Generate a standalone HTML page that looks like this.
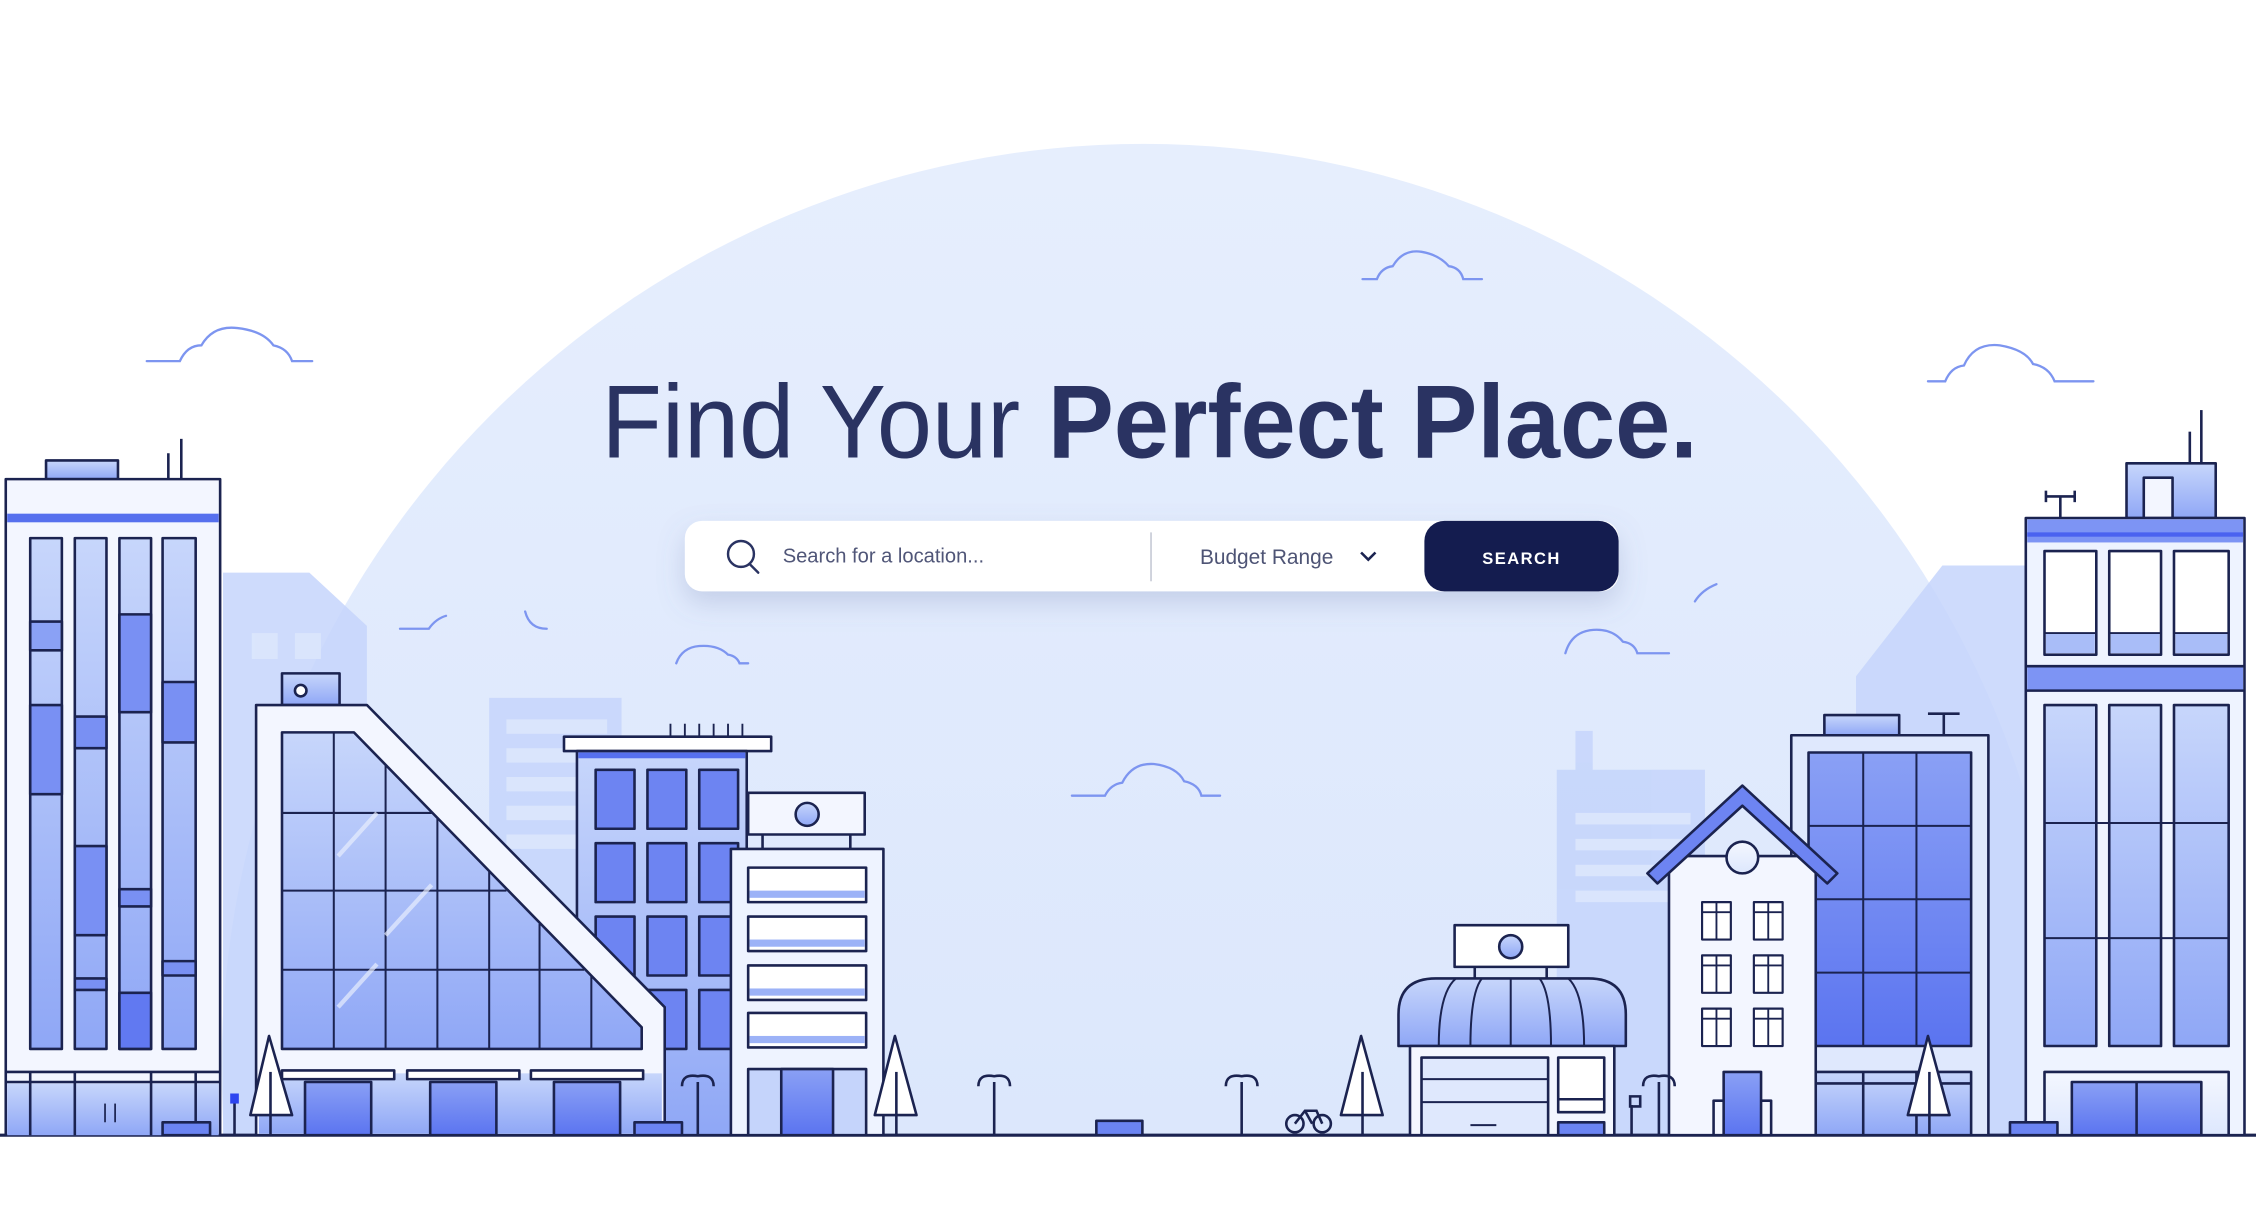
<!DOCTYPE html>
<html><head><meta charset="utf-8"><style>
html,body{margin:0;padding:0;background:#fff;width:2256px;height:1221px;overflow:hidden}
svg{display:block;overflow:hidden}
</style></head><body>
<svg width="2256" height="1221" viewBox="0 0 1568 848.6" xmlns="http://www.w3.org/2000/svg">
<defs>
<linearGradient id="bg" x1="0" y1="0" x2="0" y2="1"><stop offset="0" stop-color="#e6eefd"/><stop offset="1" stop-color="#d3e1fc"/></linearGradient>
<linearGradient id="glass" x1="0" y1="0" x2="0" y2="1"><stop offset="0" stop-color="#c7d6fb"/><stop offset="1" stop-color="#8fa7f6"/></linearGradient>
<linearGradient id="dark" x1="0" y1="0" x2="0" y2="1"><stop offset="0" stop-color="#8aa0f5"/><stop offset="1" stop-color="#5b74f0"/></linearGradient>
<linearGradient id="light" x1="0" y1="0" x2="0" y2="1"><stop offset="0" stop-color="#f4f7ff"/><stop offset="1" stop-color="#dde7fd"/></linearGradient>
<filter id="sh" x="-10%" y="-40%" width="120%" height="200%"><feDropShadow dx="0" dy="8" stdDeviation="9" flood-color="#6677aa" flood-opacity="0.25"/></filter>
<clipPath id="gc"><rect x="0" y="0" width="1568" height="789"/></clipPath>
</defs>

<g clip-path="url(#gc)"><circle cx="795" cy="741" r="641" fill="url(#bg)"/></g>

<g fill="#c5d5fb" opacity="0.85">
<path d="M155 398 H215 L255 435 V789 H155Z"/>
<rect x="340" y="485" width="92" height="304"/>
<path d="M1290 470 L1350 393 H1410 V789 H1290Z"/>
<rect x="1082" y="535" width="103" height="254"/>
<rect x="1095" y="508" width="12" height="30"/>
</g>
<g fill="#dce7fd" opacity="0.9">
<rect x="175" y="440" width="18" height="18"/><rect x="205" y="440" width="18" height="18"/>
<rect x="352" y="500" width="70" height="10"/><rect x="352" y="520" width="70" height="10"/><rect x="352" y="540" width="70" height="10"/><rect x="352" y="560" width="70" height="10"/><rect x="352" y="580" width="70" height="10"/>
<rect x="1095" y="565" width="80" height="8"/><rect x="1095" y="583" width="80" height="8"/><rect x="1095" y="601" width="80" height="8"/><rect x="1095" y="619" width="80" height="8"/>
</g>

<g fill="none" stroke="#7d95f0" stroke-width="1.6" stroke-linecap="round">
<path d="M102 251 H125 Q130 240 140 240 Q148 226 165 228 Q183 230 190 240 Q200 242 203 251 H217"/>
<path d="M947 194 H957 Q960 186 968 185 Q975 173 988 175 Q1000 177 1007 185 Q1015 186 1017 194 H1030"/>
<path d="M1340 265 H1352 Q1356 255 1365 254 Q1372 238 1390 240 Q1408 243 1413 253 Q1424 255 1428 265 H1455"/>
<path d="M745 553 H768 Q772 545 780 544 Q787 530 802 531 Q818 533 823 543 Q833 545 835 553 H848"/>
<path d="M1088 454 Q1092 440 1105 438 Q1120 436 1128 446 Q1136 447 1138 454 H1160"/>
<path d="M470 461 Q474 450 486 449 Q499 448 506 455 Q512 456 514 461 H520"/>
<path d="M278 437 H298 Q303 430 310 428 M365 425 Q368 437 380 437"/>
<path d="M1178 418 Q1183 410 1193 406"/>
</g>

<line x1="0" y1="789" x2="1568" y2="789" stroke="#1b2350" stroke-width="2.2"/>

<g stroke="#1b2350" stroke-width="1.8" stroke-linejoin="round">
<!-- left tower -->
<rect x="32" y="320" width="50" height="13" fill="url(#glass)"/>
<line x1="117" y1="315" x2="117" y2="333"/><line x1="126" y1="305" x2="126" y2="333"/>
<rect x="4" y="333" width="149" height="456" fill="#f3f6ff"/>
<rect x="5" y="357" width="147" height="6" fill="#5670ee" stroke="none"/>
<rect x="21" y="374" width="22" height="355" fill="url(#glass)"/>
<rect x="52" y="374" width="22" height="355" fill="url(#glass)"/>
<rect x="83" y="374" width="22" height="355" fill="url(#glass)"/>
<rect x="113" y="374" width="23" height="355" fill="url(#glass)"/>
<rect x="21" y="432" width="22" height="20" fill="#8aa1f5"/>
<rect x="21" y="490" width="22" height="62" fill="#7990f3"/>
<rect x="52" y="498" width="22" height="22" fill="#7990f3"/>
<rect x="52" y="588" width="22" height="62" fill="#7990f3"/>
<rect x="52" y="680" width="22" height="8" fill="#7990f3"/>
<rect x="83" y="427" width="22" height="68" fill="#7990f3"/>
<rect x="83" y="690" width="22" height="39" fill="#6179f1"/>
<rect x="83" y="618" width="22" height="12" fill="#7990f3"/>
<rect x="113" y="474" width="23" height="42" fill="#7990f3"/>
<rect x="113" y="668" width="23" height="10" fill="#7990f3"/>
<line x1="4" y1="745" x2="153" y2="745"/>
<rect x="5" y="753" width="147" height="36" fill="url(#glass)" stroke="none"/>
<line x1="4" y1="752" x2="153" y2="752"/>
<line x1="21" y1="745" x2="21" y2="789"/><line x1="52" y1="745" x2="52" y2="789"/><line x1="105" y1="745" x2="105" y2="789"/><line x1="136" y1="745" x2="136" y2="789"/>
<line x1="73" y1="767" x2="73" y2="780" stroke-width="1.2"/><line x1="80" y1="767" x2="80" y2="780" stroke-width="1.2"/>
<rect x="113" y="780" width="33" height="9" fill="#6b84f2"/>

<!-- middle building (behind) -->
<rect x="392" y="512" width="144" height="10" fill="#fff"/>
<g stroke-width="1.3"><line x1="466" y1="503" x2="466" y2="512"/><line x1="476" y1="503" x2="476" y2="512"/><line x1="486" y1="503" x2="486" y2="512"/><line x1="496" y1="503" x2="496" y2="512"/><line x1="506" y1="503" x2="506" y2="512"/><line x1="516" y1="503" x2="516" y2="512"/></g>
<rect x="401" y="522" width="118" height="267" fill="url(#glass)"/>
<rect x="402" y="523" width="116" height="4" fill="#5670ee" stroke="none"/>
<g fill="#6d84f2">
<rect x="414" y="535" width="27" height="41"/><rect x="450" y="535" width="27" height="41"/><rect x="486" y="535" width="27" height="41"/>
<rect x="414" y="586" width="27" height="41"/><rect x="450" y="586" width="27" height="41"/><rect x="486" y="586" width="27" height="41"/>
<rect x="414" y="637" width="27" height="41"/><rect x="450" y="637" width="27" height="41"/><rect x="486" y="637" width="27" height="41"/>
<rect x="414" y="688" width="27" height="41"/><rect x="450" y="688" width="27" height="41"/><rect x="486" y="688" width="27" height="41"/>
</g>

<!-- triangle glass building (in front) -->
<rect x="196" y="468" width="40" height="22" fill="url(#glass)"/>
<circle cx="209" cy="480" r="4" fill="#fff"/>
<path d="M178 490 H255 L462 700 V789 H178Z" fill="#f3f6ff"/>
<path d="M196 509 H246 L446 714 V729 H196Z" fill="url(#glass)"/>
<g fill="none" stroke-width="1.4">
<line x1="232" y1="509" x2="232" y2="729"/><line x1="268" y1="532" x2="268" y2="729"/><line x1="304" y1="569" x2="304" y2="729"/><line x1="340" y1="606" x2="340" y2="729"/><line x1="375" y1="642" x2="375" y2="729"/><line x1="411" y1="678" x2="411" y2="729"/>
<line x1="196" y1="565" x2="300" y2="565"/><line x1="196" y1="619" x2="352" y2="619"/><line x1="196" y1="674" x2="406" y2="674"/>
</g>
<g stroke="#e8eefe" stroke-width="3" opacity="0.7"><line x1="235" y1="595" x2="262" y2="565"/><line x1="268" y1="650" x2="300" y2="615"/><line x1="235" y1="700" x2="262" y2="670"/></g>
<rect x="180" y="746" width="280" height="42" fill="url(#glass)" stroke="none"/>
<rect x="196" y="744" width="78" height="6" fill="#fff"/><rect x="283" y="744" width="78" height="6" fill="#fff"/><rect x="369" y="744" width="78" height="6" fill="#fff"/>
<rect x="212" y="752" width="46" height="37" fill="url(#dark)"/><rect x="299" y="752" width="46" height="37" fill="url(#dark)"/><rect x="385" y="752" width="46" height="37" fill="url(#dark)"/>
<rect x="441" y="780" width="33" height="9" fill="#6b84f2"/>

<!-- right of middle -->
<rect x="520" y="551" width="81" height="29" fill="#f3f6ff"/>
<circle cx="561" cy="566" r="8" fill="url(#glass)"/>
<line x1="530" y1="580" x2="530" y2="590"/><line x1="591" y1="580" x2="591" y2="590"/>
<rect x="508" y="590" width="106" height="199" fill="#eef3ff"/>
<g fill="#fff"><rect x="520" y="603" width="82" height="24"/><rect x="520" y="637" width="82" height="24"/><rect x="520" y="671" width="82" height="24"/><rect x="520" y="704" width="82" height="24"/></g>
<g fill="#9cb2f7" stroke="none"><rect x="521" y="619" width="80" height="5"/><rect x="521" y="653" width="80" height="5"/><rect x="521" y="687" width="80" height="5"/><rect x="521" y="720" width="80" height="5"/></g>
<rect x="520" y="743" width="82" height="46" fill="#c5d4fb"/>
<rect x="543" y="743" width="36" height="46" fill="url(#dark)"/>

<!-- shop -->
<rect x="1011" y="643" width="79" height="29" fill="#fff"/>
<circle cx="1050" cy="658" r="8" fill="url(#glass)"/>
<line x1="1025" y1="672" x2="1025" y2="680"/><line x1="1075" y1="672" x2="1075" y2="680"/>
<path d="M972 727 V705 Q972 680 998 680 H1104 Q1130 680 1130 705 V727Z" fill="url(#glass)"/>
<g fill="none" stroke-width="1.4"><path d="M1000 727 Q1000 690 1012 680"/><path d="M1022 727 Q1022 690 1030 680"/><path d="M1050 727 V680"/><path d="M1078 727 Q1078 690 1070 680"/><path d="M1101 727 Q1101 690 1090 680"/></g>
<rect x="980" y="727" width="142" height="62" fill="#f3f6ff"/>
<rect x="988" y="735" width="88" height="54" fill="#dfe8fd"/>
<g stroke-width="1.4"><line x1="988" y1="750" x2="1076" y2="750"/><line x1="988" y1="766" x2="1076" y2="766"/><line x1="1022" y1="782" x2="1040" y2="782"/></g>
<rect x="1083" y="735" width="32" height="38" fill="#fff"/>
<line x1="1083" y1="764" x2="1115" y2="764"/>
<rect x="1083" y="780" width="32" height="9" fill="#6b84f2"/>

<!-- blue glass building right -->
<rect x="1268" y="497" width="52" height="14" fill="url(#glass)"/>
<line x1="1340" y1="496" x2="1362" y2="496"/><line x1="1351" y1="496" x2="1351" y2="511"/>
<rect x="1245" y="511" width="137" height="278" fill="#dfe8fd"/>
<rect x="1257" y="523" width="113" height="204" fill="url(#dark)"/>
<g stroke-width="1.4"><line x1="1295" y1="523" x2="1295" y2="727"/><line x1="1332" y1="523" x2="1332" y2="727"/><line x1="1257" y1="574" x2="1370" y2="574"/><line x1="1257" y1="625" x2="1370" y2="625"/><line x1="1257" y1="676" x2="1370" y2="676"/></g>
<rect x="1257" y="745" width="113" height="44" fill="url(#glass)"/>
<line x1="1257" y1="753" x2="1370" y2="753"/>
<line x1="1295" y1="745" x2="1295" y2="789"/><line x1="1332" y1="745" x2="1332" y2="789"/>

<!-- house -->
<rect x="1160" y="595" width="102" height="194" fill="#f3f6ff"/>
<path d="M1145 607 L1211 546 L1277 607 L1270 614 L1211 560 L1152 614Z" fill="#6d84f2"/>
<circle cx="1211" cy="596" r="11" fill="url(#light)"/>
<g fill="#fff" stroke-width="1.5">
<rect x="1183" y="627" width="20" height="26"/><rect x="1219" y="627" width="20" height="26"/>
<rect x="1183" y="664" width="20" height="26"/><rect x="1219" y="664" width="20" height="26"/>
<rect x="1183" y="701" width="20" height="26"/><rect x="1219" y="701" width="20" height="26"/>
</g>
<g stroke-width="1.3"><line x1="1193" y1="627" x2="1193" y2="653"/><line x1="1229" y1="627" x2="1229" y2="653"/><line x1="1193" y1="664" x2="1193" y2="690"/><line x1="1229" y1="664" x2="1229" y2="690"/><line x1="1193" y1="701" x2="1193" y2="727"/><line x1="1229" y1="701" x2="1229" y2="727"/>
<line x1="1183" y1="634" x2="1203" y2="634"/><line x1="1219" y1="634" x2="1239" y2="634"/><line x1="1183" y1="671" x2="1203" y2="671"/><line x1="1219" y1="671" x2="1239" y2="671"/><line x1="1183" y1="708" x2="1203" y2="708"/><line x1="1219" y1="708" x2="1239" y2="708"/></g>
<rect x="1198" y="745" width="26" height="44" fill="url(#dark)"/>
<path d="M1191 789 V765 H1198 M1224 765 H1231 V789" fill="none"/>

<!-- right tall tower -->
<rect x="1478" y="322" width="62" height="38" fill="url(#glass)"/>
<rect x="1490" y="332" width="20" height="28" fill="#f3f6ff"/>
<line x1="1522" y1="300" x2="1522" y2="322"/><line x1="1530" y1="285" x2="1530" y2="322"/>
<line x1="1422" y1="345" x2="1442" y2="345"/><line x1="1432" y1="345" x2="1432" y2="360"/><line x1="1422" y1="341" x2="1422" y2="349"/><line x1="1442" y1="341" x2="1442" y2="349"/>
<rect x="1408" y="360" width="152" height="429" fill="#eef3ff"/>
<rect x="1409" y="361" width="150" height="16" fill="#7d94f4" stroke="none"/>
<rect x="1409" y="370" width="150" height="3" fill="#4a62f0" stroke="none"/>
<rect x="1409" y="463" width="150" height="17" fill="#7d94f4" stroke="none"/>
<line x1="1408" y1="463" x2="1560" y2="463"/><line x1="1408" y1="480" x2="1560" y2="480"/>
<g fill="#fff"><rect x="1421" y="383" width="36" height="72"/><rect x="1466" y="383" width="36" height="72"/><rect x="1511" y="383" width="38" height="72"/></g>
<g fill="#a9bdf8" stroke="none"><rect x="1422" y="440" width="34" height="14"/><rect x="1467" y="440" width="34" height="14"/><rect x="1512" y="440" width="36" height="14"/></g>
<g stroke-width="1.3"><line x1="1421" y1="440" x2="1457" y2="440"/><line x1="1466" y1="440" x2="1502" y2="440"/><line x1="1511" y1="440" x2="1549" y2="440"/></g>
<g fill="url(#glass)"><rect x="1421" y="490" width="36" height="237"/><rect x="1466" y="490" width="36" height="237"/><rect x="1511" y="490" width="38" height="237"/></g>
<g stroke-width="1.4"><line x1="1421" y1="572" x2="1549" y2="572"/><line x1="1421" y1="652" x2="1549" y2="652"/></g>
<rect x="1421" y="745" width="128" height="44" fill="url(#light)"/>
<rect x="1440" y="752" width="90" height="37" fill="url(#dark)"/>
<line x1="1485" y1="752" x2="1485" y2="789"/>
<rect x="1397" y="780" width="33" height="9" fill="#6b84f2"/>
<rect x="762" y="779" width="32" height="10" fill="#6b84f2"/>
</g>

<g stroke="#1b2350" stroke-width="1.8" fill="#fff" stroke-linejoin="round">
<path d="M187 720 L174 775 H203Z"/><line x1="188" y1="745" x2="188" y2="789"/>
<path d="M622 720 L608 775 H637Z"/><line x1="623" y1="745" x2="623" y2="789"/>
<path d="M946 720 L932 775 H961Z"/><line x1="947" y1="745" x2="947" y2="789"/>
<path d="M1340 720 L1326 775 H1355Z"/><line x1="1341" y1="745" x2="1341" y2="789"/>
</g>
<g stroke="#1b2350" stroke-width="1.8" fill="none">
<path d="M485 789 V752 M474 755 Q474 746 485 748 Q496 746 496 755"/>
<path d="M691 789 V752 M680 755 Q680 746 691 748 Q702 746 702 755"/>
<path d="M863 789 V752 M852 755 Q852 746 863 748 Q874 746 874 755"/>
<path d="M1153 789 V752 M1142 755 Q1142 746 1153 748 Q1164 746 1164 755"/>
<circle cx="900" cy="781" r="6"/><circle cx="919" cy="781" r="6"/><path d="M900 781 L907 772 H915 L919 781 M907 772 L912 781"/>
<path d="M1134 789 V768 M1133 762 h7 v7 h-7z"/>
<path d="M163 789 V765"/>
</g>
<rect x="160" y="760" width="6" height="7" fill="#2d45f0"/>

<text x="418" y="318" textLength="762" lengthAdjust="spacingAndGlyphs" font-family="'Liberation Sans', sans-serif" font-size="72" fill="#2a3362"><tspan>Find Your </tspan><tspan font-weight="bold">Perfect Place.</tspan></text>

<rect x="476" y="362" width="649" height="49" rx="12" fill="#fff" filter="url(#sh)"/>
<circle cx="515" cy="385" r="9" fill="none" stroke="#2a3362" stroke-width="1.7"/>
<line x1="521" y1="392" x2="527" y2="398" stroke="#2a3362" stroke-width="1.7" stroke-linecap="round"/>
<text x="544" y="391" font-family="'Liberation Sans', sans-serif" font-size="14" fill="#505678">Search for a location...</text>
<line x1="800" y1="370" x2="800" y2="404" stroke="#c9cdd8" stroke-width="1.2"/>
<text x="834" y="392" font-family="'Liberation Sans', sans-serif" font-size="14.5" fill="#4e5475">Budget Range</text>
<path d="M946 384 L951 389 L956 384" fill="none" stroke="#1b2350" stroke-width="1.8"/>
<rect x="990" y="362" width="135" height="49" rx="14" fill="#141c4f"/>
<text x="1057.5" y="392" text-anchor="middle" font-family="'Liberation Sans', sans-serif" font-size="11.5" font-weight="bold" letter-spacing="1" fill="#fff">SEARCH</text>
</svg>
</body></html>
